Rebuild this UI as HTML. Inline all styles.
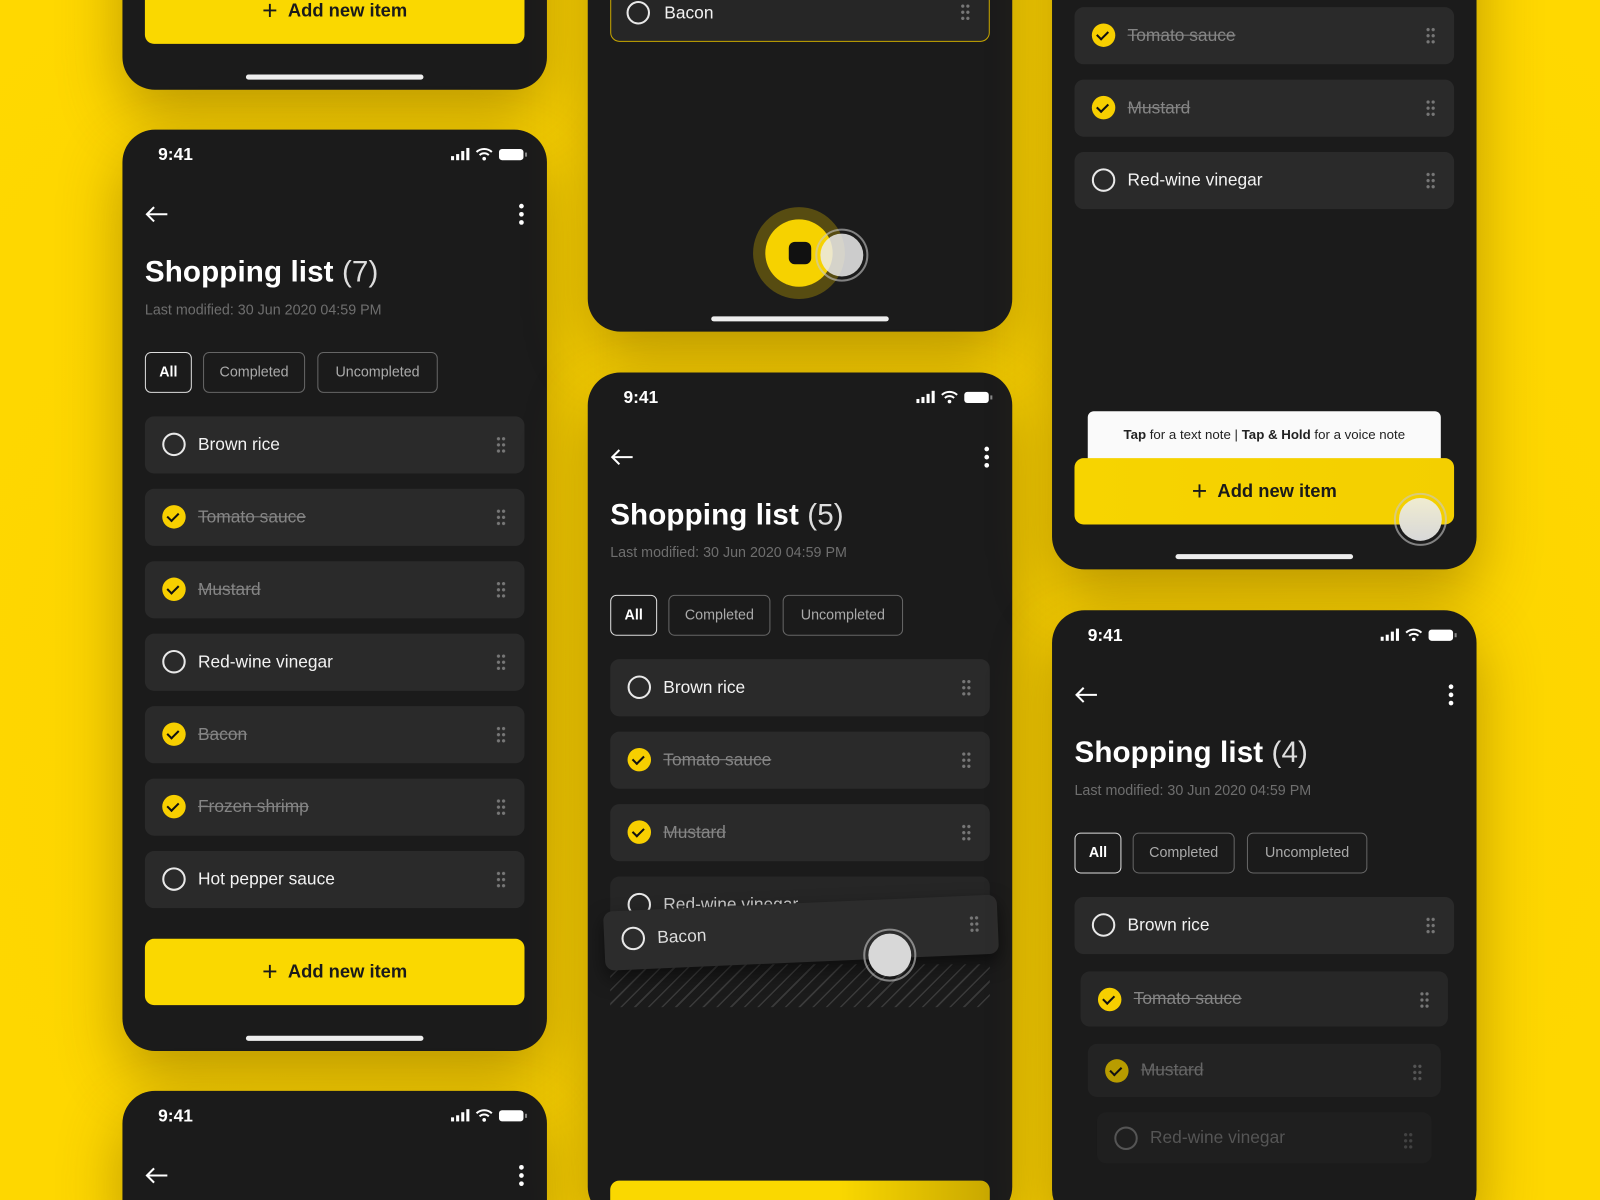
<!DOCTYPE html>
<html><head><meta charset="utf-8"><style>
*{margin:0;padding:0;box-sizing:border-box}
html,body{width:1600px;height:1200px;overflow:hidden;background:#fdd600;font-family:"Liberation Sans",sans-serif}
#w{position:absolute;left:0;top:0;width:1568px;height:1176px;transform:scale(1.020408);transform-origin:0 0;background:radial-gradient(ellipse at 50% 60%,#f3cc00 0%,#fdd600 60%,#ffd800 100%);overflow:hidden}
.ph{position:absolute;width:416px;height:903px;background:#1b1b1b;border-radius:32px;box-shadow:0 24px 60px rgba(110,80,0,.45);overflow:hidden}
.tm{position:absolute;left:35px;top:15px;color:#fff;font-size:17px;font-weight:bold}
.st{position:absolute;right:18px;top:17px}
.bk{position:absolute;left:22px;top:74px}
.mn{position:absolute;left:388px;top:72px}
.ti{position:absolute;left:22px;top:124px;color:#fff;font-size:29px;font-weight:bold;letter-spacing:.1px}
.ti span{font-weight:normal;color:#ddd}
.sub{position:absolute;left:22px;top:168px;color:#6e6e6e;font-size:14px}
.chip{position:absolute;top:218px;height:40px;border:1.5px solid #666;border-radius:6px;color:#aaa;font-size:14px;line-height:37px;text-align:center}
.chip.a{border-color:#ddd;color:#fff;font-weight:bold}
.row{position:absolute;left:22px;width:372px;height:56px;background:#2a2a2a;border-radius:9px}
.row .c{position:absolute;left:17px;top:16px;width:23px;height:23px;border:2px solid #e8e8e8;border-radius:50%}
.row .k{position:absolute;left:17px;top:16px;width:23px;height:23px;background:#f7cf00;border-radius:50%}
.row .k:after{content:"";position:absolute;left:7px;top:5px;width:5px;height:9px;border:solid #111;border-width:0 2px 2px 0;transform:rotate(45deg)}
.row .t{position:absolute;left:52px;top:18px;color:#f2f2f2;font-size:17px}
.row .t.s{color:#858585;text-decoration:line-through}
.row .d{position:absolute;right:18px;top:19px;width:10px;height:18px;background:radial-gradient(circle,#777 1.4px,transparent 1.8px) 0 0/5px 6px}
.btn{position:absolute;left:22px;width:372px;height:65px;background:#fad800;border-radius:9px;color:#1a1a1a;font-size:18px;font-weight:bold;text-align:center;line-height:65px}
.btn b{font-size:26px;font-weight:normal;vertical-align:-3px;margin-right:10px}
.hb{position:absolute;left:121px;width:174px;height:5px;background:#eee;border-radius:3px}
</style></head><body><div id="w">

<!-- Phone A -->
<div class="ph" style="left:120px;top:-815px">
<div class="btn" style="top:793px"><b>+</b>Add new item</div>
<div class="hb" style="top:888px"></div>
</div>

<!-- Phone B -->
<div class="ph" style="left:120px;top:127px">
<div class="tm">9:41</div>
<svg class="st" width="76" height="16" viewBox="0 0 76 16"><rect x="0" y="9" width="3" height="4" fill="#fff"/><rect x="5" y="7" width="3" height="6" fill="#fff"/><rect x="10" y="4" width="3" height="9" fill="#fff"/><rect x="15" y="1" width="3" height="12" fill="#fff"/><path d="M25 5a11 11 0 0 1 15 0M28 8a6.5 6.5 0 0 1 9 0" stroke="#fff" stroke-width="2" fill="none"/><circle cx="32.5" cy="11.5" r="1.8" fill="#fff"/><rect x="47" y="2" width="24" height="11" rx="3" fill="#fff"/><rect x="72.5" y="5.5" width="2" height="4" fill="#888"/></svg>
<svg class="bk" width="24" height="18"><path d="M2 9H22M9 2L2 9l7 7" stroke="#fff" stroke-width="2" fill="none"/></svg>
<svg class="mn" width="6" height="22"><circle cx="3" cy="3" r="2.3" fill="#fff"/><circle cx="3" cy="11" r="2.3" fill="#fff"/><circle cx="3" cy="19" r="2.3" fill="#fff"/></svg>
<div class="ti">Shopping list <span>(7)</span></div>
<div class="sub">Last modified: 30 Jun 2020 04:59 PM</div>
<div class="chip a" style="left:22px;width:46px">All</div>
<div class="chip" style="left:79px;width:100px">Completed</div>
<div class="chip" style="left:191px;width:118px">Uncompleted</div>
<div class="row" style="top:281px"><i class="c"></i><span class="t">Brown rice</span><i class="d"></i></div>
<div class="row" style="top:352px"><i class="k"></i><span class="t s">Tomato sauce</span><i class="d"></i></div>
<div class="row" style="top:423px"><i class="k"></i><span class="t s">Mustard</span><i class="d"></i></div>
<div class="row" style="top:494px"><i class="c"></i><span class="t">Red-wine vinegar</span><i class="d"></i></div>
<div class="row" style="top:565px"><i class="k"></i><span class="t s">Bacon</span><i class="d"></i></div>
<div class="row" style="top:636px"><i class="k"></i><span class="t s">Frozen shrimp</span><i class="d"></i></div>
<div class="row" style="top:707px"><i class="c"></i><span class="t">Hot pepper sauce</span><i class="d"></i></div>
<div class="btn" style="top:793px"><b>+</b>Add new item</div>
<div class="hb" style="top:888px"></div>
</div>

<!-- Phone C -->
<div class="ph" style="left:120px;top:1069px;height:140px">
<div class="tm">9:41</div>
<svg class="st" width="76" height="16" viewBox="0 0 76 16"><rect x="0" y="9" width="3" height="4" fill="#fff"/><rect x="5" y="7" width="3" height="6" fill="#fff"/><rect x="10" y="4" width="3" height="9" fill="#fff"/><rect x="15" y="1" width="3" height="12" fill="#fff"/><path d="M25 5a11 11 0 0 1 15 0M28 8a6.5 6.5 0 0 1 9 0" stroke="#fff" stroke-width="2" fill="none"/><circle cx="32.5" cy="11.5" r="1.8" fill="#fff"/><rect x="47" y="2" width="24" height="11" rx="3" fill="#fff"/><rect x="72.5" y="5.5" width="2" height="4" fill="#888"/></svg>
<svg class="bk" width="24" height="18"><path d="M2 9H22M9 2L2 9l7 7" stroke="#fff" stroke-width="2" fill="none"/></svg>
<svg class="mn" width="6" height="22"><circle cx="3" cy="3" r="2.3" fill="#fff"/><circle cx="3" cy="11" r="2.3" fill="#fff"/><circle cx="3" cy="19" r="2.3" fill="#fff"/></svg>
</div>

<!-- Phone D -->
<div class="ph" style="left:576px;top:-578px">
<div class="row" style="top:563px;border:1.5px solid #c9a800;background:#262626"><i class="c" style="left:15px;top:15px"></i><span class="t" style="top:17px">Bacon</span><i class="d" style="top:17px"></i></div>
<div style="position:absolute;left:162px;top:781px;width:90px;height:90px;border-radius:50%;background:rgba(200,170,0,.35)"></div>
<div style="position:absolute;left:174px;top:793px;width:66px;height:66px;border-radius:50%;background:#f6d200"></div>
<div style="position:absolute;left:197px;top:815px;width:22px;height:22px;border-radius:6px;background:#111"></div>
<div style="position:absolute;left:223px;top:802px;width:52px;height:52px;border-radius:50%;border:2px solid rgba(200,200,200,.6)"></div>
<div style="position:absolute;left:228px;top:807px;width:42px;height:42px;border-radius:50%;background:rgba(235,235,235,.85)"></div>
<div class="hb" style="top:888px"></div>
</div>

<!-- Phone E -->
<div class="ph" style="left:576px;top:365px;height:830px">
<div class="tm">9:41</div>
<svg class="st" width="76" height="16" viewBox="0 0 76 16"><rect x="0" y="9" width="3" height="4" fill="#fff"/><rect x="5" y="7" width="3" height="6" fill="#fff"/><rect x="10" y="4" width="3" height="9" fill="#fff"/><rect x="15" y="1" width="3" height="12" fill="#fff"/><path d="M25 5a11 11 0 0 1 15 0M28 8a6.5 6.5 0 0 1 9 0" stroke="#fff" stroke-width="2" fill="none"/><circle cx="32.5" cy="11.5" r="1.8" fill="#fff"/><rect x="47" y="2" width="24" height="11" rx="3" fill="#fff"/><rect x="72.5" y="5.5" width="2" height="4" fill="#888"/></svg>
<svg class="bk" width="24" height="18"><path d="M2 9H22M9 2L2 9l7 7" stroke="#fff" stroke-width="2" fill="none"/></svg>
<svg class="mn" width="6" height="22"><circle cx="3" cy="3" r="2.3" fill="#fff"/><circle cx="3" cy="11" r="2.3" fill="#fff"/><circle cx="3" cy="19" r="2.3" fill="#fff"/></svg>
<div class="ti">Shopping list <span>(5)</span></div>
<div class="sub">Last modified: 30 Jun 2020 04:59 PM</div>
<div class="chip a" style="left:22px;width:46px">All</div>
<div class="chip" style="left:79px;width:100px">Completed</div>
<div class="chip" style="left:191px;width:118px">Uncompleted</div>
<div class="row" style="top:281px"><i class="c"></i><span class="t">Brown rice</span><i class="d"></i></div>
<div class="row" style="top:352px"><i class="k"></i><span class="t s">Tomato sauce</span><i class="d"></i></div>
<div class="row" style="top:423px"><i class="k"></i><span class="t s">Mustard</span><i class="d"></i></div>
<div class="row" style="top:494px;background:#262626"><i class="c"></i><span class="t" style="color:#ccc">Red-wine vinegar</span><i class="d"></i></div>
<div style="position:absolute;left:22px;top:580px;width:372px;height:42px;background:repeating-linear-gradient(135deg,transparent 0 8px,#3a3a3a 8px 9.5px)"></div>
<div class="row" style="left:16px;top:520px;width:386px;height:58px;background:#2c2c2c;transform:rotate(-2.5deg);box-shadow:0 8px 18px rgba(0,0,0,.5)"><i class="c"></i><span class="t" style="color:#ddd">Bacon</span><i class="d"></i></div>
<div style="position:absolute;left:270px;top:545px;width:52px;height:52px;border-radius:50%;border:2px solid rgba(200,200,200,.6)"></div>
<div style="position:absolute;left:275px;top:550px;width:42px;height:42px;border-radius:50%;background:#d8d8d8"></div>
<div class="btn" style="top:792px;background:linear-gradient(90deg,#fad800 60%,#c9a800)"></div>
</div>

<!-- Phone F -->
<div class="ph" style="left:1031px;top:-345px">
<div class="row" style="top:352px"><i class="k"></i><span class="t s">Tomato sauce</span><i class="d"></i></div>
<div class="row" style="top:423px"><i class="k"></i><span class="t s">Mustard</span><i class="d"></i></div>
<div class="row" style="top:494px"><i class="c"></i><span class="t">Red-wine vinegar</span><i class="d"></i></div>
<div style="position:absolute;left:35px;top:748px;width:346px;height:52px;background:#fafafa;border-radius:6px;color:#222;font-size:13px;text-align:center;padding-top:15px"><b>Tap</b> for a text note | <b>Tap &amp; Hold</b> for a voice note</div>
<div class="btn" style="top:794px;background:linear-gradient(90deg,#f7d400,#f3cf00)"><b>+</b>Add new item</div>
<div style="position:absolute;left:335px;top:828px;width:52px;height:52px;border-radius:50%;border:2px solid rgba(200,200,200,.6)"></div>
<div style="position:absolute;left:340px;top:833px;width:42px;height:42px;border-radius:50%;background:linear-gradient(#f0ecd0,#d8d8d8)"></div>
<div class="hb" style="top:888px"></div>
</div>

<!-- Phone G -->
<div class="ph" style="left:1031px;top:598px;height:600px">
<div class="tm">9:41</div>
<svg class="st" width="76" height="16" viewBox="0 0 76 16"><rect x="0" y="9" width="3" height="4" fill="#fff"/><rect x="5" y="7" width="3" height="6" fill="#fff"/><rect x="10" y="4" width="3" height="9" fill="#fff"/><rect x="15" y="1" width="3" height="12" fill="#fff"/><path d="M25 5a11 11 0 0 1 15 0M28 8a6.5 6.5 0 0 1 9 0" stroke="#fff" stroke-width="2" fill="none"/><circle cx="32.5" cy="11.5" r="1.8" fill="#fff"/><rect x="47" y="2" width="24" height="11" rx="3" fill="#fff"/><rect x="72.5" y="5.5" width="2" height="4" fill="#888"/></svg>
<svg class="bk" width="24" height="18"><path d="M2 9H22M9 2L2 9l7 7" stroke="#fff" stroke-width="2" fill="none"/></svg>
<svg class="mn" width="6" height="22"><circle cx="3" cy="3" r="2.3" fill="#fff"/><circle cx="3" cy="11" r="2.3" fill="#fff"/><circle cx="3" cy="19" r="2.3" fill="#fff"/></svg>
<div class="ti">Shopping list <span>(4)</span></div>
<div class="sub">Last modified: 30 Jun 2020 04:59 PM</div>
<div class="chip a" style="left:22px;width:46px">All</div>
<div class="chip" style="left:79px;width:100px">Completed</div>
<div class="chip" style="left:191px;width:118px">Uncompleted</div>
<div class="row" style="top:281px"><i class="c"></i><span class="t">Brown rice</span><i class="d"></i></div>
<div class="row" style="top:354px;left:28px;width:360px;height:54px;background:#272727"><i class="k" style="top:16px"></i><span class="t s" style="top:17px">Tomato sauce</span><i class="d"></i></div>
<div class="row" style="top:425px;left:35px;width:346px;height:52px;background:#232323"><i class="k" style="background:#b89c00;top:15px"></i><span class="t s" style="color:#666;top:16px">Mustard</span><i class="d" style="opacity:.6"></i></div>
<div class="row" style="top:492px;left:44px;width:328px;height:50px;background:#1f1f1f"><i class="c" style="border-color:#555;top:14px"></i><span class="t" style="color:#555;top:15px">Red-wine vinegar</span><i class="d" style="opacity:.4"></i></div>
</div>

</div></body></html>
